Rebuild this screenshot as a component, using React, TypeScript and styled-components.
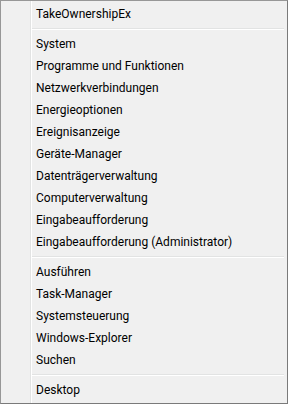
import React from "react";
import styled, { createGlobalStyle } from "styled-components";

const Global = createGlobalStyle`
  html, body { margin: 0; padding: 0; background: #6b6b6b; }
  #root { width: 288px; height: 404px; }
`;

const Menu = styled.div`
  box-sizing: border-box;
  width: 288px;
  height: 404px;
  border: 1px solid #979797;
  border-right-color: #7a7a7a;
  border-bottom-color: #7a7a7a;
  padding: 2px;
  background-color: #f0f0f0;
  background-image: linear-gradient(
    to right,
    transparent 29px,
    #e2e3e3 29px,
    #e2e3e3 30px,
    #ffffff 30px,
    #ffffff 31px,
    transparent 31px
  );
  background-origin: padding-box;
  background-repeat: no-repeat;
  display: flex;
  flex-direction: column;
  font-family: Roboto, "Noto Sans", sans-serif;
  font-size: 12px;
  color: #000;
`;

const Item = styled.div`
  height: 22px;
  display: flex;
  align-items: center;
  padding-left: 33px;
  white-space: nowrap;
`;

const Separator = styled.div`
  height: 8px;
  display: flex;
  flex-direction: column;
  justify-content: center;
  padding-left: 29px;
  padding-right: 1px;
  &::before {
    content: "";
    display: block;
    height: 1px;
    background: #e2e3e3;
  }
  &::after {
    content: "";
    display: block;
    height: 1px;
    background: #ffffff;
  }
`;

const groups: string[][] = [
  ["TakeOwnershipEx"],
  [
    "System",
    "Programme und Funktionen",
    "Netzwerkverbindungen",
    "Energieoptionen",
    "Ereignisanzeige",
    "Geräte-Manager",
    "Datenträgerverwaltung",
    "Computerverwaltung",
    "Eingabeaufforderung",
    "Eingabeaufforderung (Administrator)",
  ],
  ["Ausführen", "Task-Manager", "Systemsteuerung", "Windows-Explorer", "Suchen"],
  ["Desktop"],
];

export default function App() {
  return (
    <>
      <Global />
      <Menu>
        {groups.map((g, gi) => (
          <React.Fragment key={gi}>
            {gi > 0 && <Separator />}
            {g.map((label) => (
              <Item key={label}>{label}</Item>
            ))}
          </React.Fragment>
        ))}
      </Menu>
    </>
  );
}
